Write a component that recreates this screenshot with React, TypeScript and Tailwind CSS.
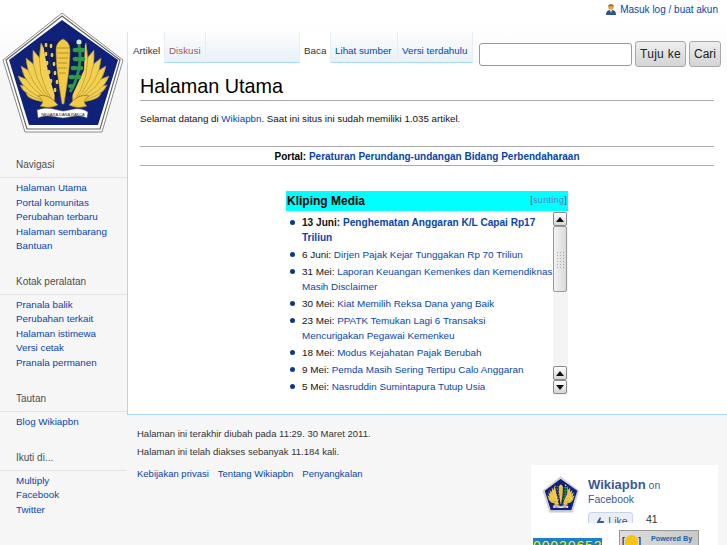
import React from 'react';

const font = "[font-family:'Liberation_Sans',Arial,sans-serif]";

// feather tips for the left wing, the right one is mirrored
const feathers: [number, number][] = [
  [26, 93], [20, 85], [18, 76], [21, 66], [26, 58], [33, 50], [41, 43],
];

const Wing: React.FC = () => (
  <g>
    {feathers.map(([x, y]) => (
      <path
        key={x + '-' + y}
        d={`M54 103 Q${(x + 54) / 2 - 13} ${(y + 103) / 2 + 3} ${x} ${y} Q${(x + 54) / 2 + 11} ${(y + 103) / 2 - 4} 54 103Z`}
        fill="#f3d052"
        stroke="#a5862c"
        strokeWidth="0.6"
      />
    ))}
    <path d="M38 96 C46 94 52 98 58 105 C52 108 46 108 40 106 C44 103 43 99 38 96Z" fill="#f0cb48" stroke="#8f7524" strokeWidth="0.7" />
  </g>
);

const Logo: React.FC<{ className?: string }> = ({ className }) => (
  <svg viewBox="0 0 127 135" className={className}>
    <polygon points="62,13 123,60 102,132 25,132 3,60" fill="#fff" stroke="#8a8a8a" strokeWidth="1" />
    <polygon points="62,16 120,60 100,129 27,129 6,60" fill="#fff" stroke="#666" strokeWidth="1.2" />
    <polygon points="62,20 118,60 98,125 29,125 9,60" fill="#10217a" />
    <Wing />
    <g transform="matrix(-1 0 0 1 127 0)">
      <Wing />
    </g>
    {/* rice */}
    <path d="M43 41 L58 41 L62 92 L56 98 C50 82 45 60 43 41Z" fill="#0d1a5c" />
    <path d="M47 43 C49 60 53 80 59 94" stroke="#2c2f52" strokeWidth="1" fill="none" />
    <g fill="#e6ca5c">
      <ellipse cx="46" cy="45" rx="1.4" ry="2.3" /><ellipse cx="51" cy="46" rx="1.4" ry="2.3" />
      <ellipse cx="46" cy="54" rx="1.4" ry="2.3" /><ellipse cx="52" cy="55" rx="1.4" ry="2.3" />
      <ellipse cx="47" cy="63" rx="1.4" ry="2.3" /><ellipse cx="54" cy="64" rx="1.4" ry="2.3" />
      <ellipse cx="49" cy="72" rx="1.4" ry="2.3" /><ellipse cx="55" cy="73" rx="1.4" ry="2.3" />
      <ellipse cx="51" cy="81" rx="1.4" ry="2.3" /><ellipse cx="57" cy="82" rx="1.4" ry="2.3" />
      <ellipse cx="55" cy="90" rx="1.4" ry="2.3" />
    </g>
    {/* green stalk */}
    <path d="M69 41 L85 41 L84 70 L72 96 L66 96Z" fill="#0d1a5c" />
    <circle cx="79" cy="42" r="2.6" fill="#d8e8dc" />
    <path d="M79 45 C82 60 78 80 70 92" stroke="#2a8f47" strokeWidth="3" fill="none" />
    <g fill="#2f9a4d">
      <ellipse cx="76" cy="50" rx="3.4" ry="2.3" /><ellipse cx="82" cy="50" rx="3.4" ry="2.3" />
      <ellipse cx="76" cy="59" rx="3.4" ry="2.3" /><ellipse cx="82" cy="59" rx="3.4" ry="2.3" />
      <ellipse cx="74" cy="68" rx="3.4" ry="2.3" /><ellipse cx="80" cy="68" rx="3.4" ry="2.3" />
      <ellipse cx="72" cy="77" rx="3.4" ry="2.3" /><ellipse cx="78" cy="77" rx="3.4" ry="2.3" />
      <ellipse cx="71" cy="86" rx="3" ry="2" />
    </g>
    {/* column */}
    <path d="M63 39 C67 41 70 44 70 50 C70 70 66 90 64 104 L62 104 C60 90 56 70 56 50 C56 44 59 41 63 39Z" fill="#f1c944" stroke="#a5862a" strokeWidth="0.6" />
    <path d="M57 48 H69 M57 53 H69 M57 58 H68 M58 63 H67 M58 68 H67 M59 73 H66" stroke="#a5862a" strokeWidth="0.8" />
    {/* ribbon */}
    <path d="M37 110 C48 106 55 110 63 111 C72 110 79 106 88 112 L87 118 C78 114 72 117 63 118 C54 117 47 114 38 118 Z" fill="#fff" stroke="#555" strokeWidth="0.5" />
    <text x="63" y="115.5" textAnchor="middle" fontSize="4" fill="#222" fontFamily="'Liberation Sans',sans-serif">NEGARA DANA RAKCA</text>
  </svg>
);

const NavBlock: React.FC<{ title: string; links: string[]; className: string }> = ({ title, links, className }) => (
  <div className={className}>
    <div className="pl-4 h-[22px] text-[10px] leading-[14px] pt-[2px] text-[#4d4d4d] border-b border-[#e2e2e2]">{title}</div>
    <ul className="pl-4 pt-[3px]">
      {links.map((l) => (
        <li key={l} className="h-[14.5px] text-[9.8px] leading-[14.5px] text-[#0645ad] whitespace-nowrap">{l}</li>
      ))}
    </ul>
  </div>
);

const Tab: React.FC<{ label: string; active?: boolean; color?: string; className?: string }> = ({ label, active, color, className }) => (
  <div
    className={`h-[31px] px-[4px] pt-[12px] text-[9.8px] leading-[14px] whitespace-nowrap border-r border-[#e4eff7] ${
      active ? 'bg-white text-[#333]' : `bg-gradient-to-b from-transparent to-[#e8f2f8] border-b border-b-[#a7d7f9] ${color ?? 'text-[#0645ad]'}`
    } ${className ?? ''}`}
  >
    {label}
  </div>
);

const Arrow: React.FC<{ up?: boolean }> = ({ up }) => (
  <div className="w-[14px] h-[14px] rounded-[2px] border border-[#8b8b8b] bg-gradient-to-b from-white to-[#d6d6d6] flex items-center justify-center">
    <svg viewBox="0 0 8 5" className="w-[8px] h-[5px]">
      <polygon points={up ? '4,0 8,5 0,5' : '0,0 8,0 4,5'} fill="#111" />
    </svg>
  </div>
);

const news: { date: string; title: string; bold?: boolean }[] = [
  { date: '13 Juni:', title: 'Penghematan Anggaran K/L Capai Rp17 Triliun', bold: true },
  { date: '6 Juni:', title: 'Dirjen Pajak Kejar Tunggakan Rp 70 Triliun' },
  { date: '31 Mei:', title: 'Laporan Keuangan Kemenkes dan Kemendiknas\nMasih Disclaimer' },
  { date: '30 Mei:', title: 'Kiat Memilih Reksa Dana yang Baik' },
  { date: '23 Mei:', title: 'PPATK Temukan Lagi 6 Transaksi\nMencurigakan Pegawai Kemenkeu' },
  { date: '18 Mei:', title: 'Modus Kejahatan Pajak Berubah' },
  { date: '9 Mei:', title: 'Pemda Masih Sering Tertipu Calo Anggaran' },
  { date: '5 Mei:', title: 'Nasruddin Sumintapura Tutup Usia' },
];

const App: React.FC = () => {
  return (
    <div className={`relative w-[727px] h-[545px] overflow-hidden flex bg-[#f6f6f6] ${font}`}>
      <div className="absolute inset-x-0 top-0 h-[80px] bg-gradient-to-b from-white from-30% to-[#f6f6f6]" />

      {/* sidebar */}
      <div className="relative w-[127px] shrink-0">
        <Logo className="w-[127px] h-[135px] block" />
        <NavBlock className="mt-[21px]" title="Navigasi" links={['Halaman Utama', 'Portal komunitas', 'Perubahan terbaru', 'Halaman sembarang', 'Bantuan']} />
        <NavBlock className="mt-[19px]" title="Kotak peralatan" links={['Pranala balik', 'Perubahan terkait', 'Halaman istimewa', 'Versi cetak', 'Pranala permanen']} />
        <NavBlock className="mt-[20px]" title="Tautan" links={['Blog Wikiapbn']} />
        <NavBlock className="mt-[19px]" title="Ikuti di..." links={['Multiply', 'Facebook', 'Twitter']} />
      </div>

      {/* main column */}
      <div className="relative flex-1 min-w-0">
        <div className="h-[32px] pt-[3px] pr-[9px] flex justify-end items-start gap-[4px] text-[10px] leading-[14px] text-[#0645ad]">
          <svg viewBox="0 0 10 12" className="w-[10px] h-[12px]">
            <path d="M0 12 C0 8 2 7 5 7 C8 7 10 8 10 12Z" fill="#2f5488" />
            <path d="M4 7 L6 7 L5 10Z" fill="#fff" />
            <circle cx="5" cy="4" r="2.8" fill="#e3a24a" />
            <path d="M2.2 3.6 C2.2 0.4 7.8 0.4 7.8 3.6 C6.5 2.6 3.5 2.6 2.2 3.6Z" fill="#8a6a2c" />
          </svg>
          <span>Masuk log / buat akun</span>
        </div>

        {/* tabs and search */}
        <div className="h-[31px] flex items-start">
          <Tab label="Artikel" active className="border-l border-l-[#cfe6f8] pl-[5px] w-[38px]" />
          <Tab label="Diskusi" color="text-[#a55858]" className="w-[41px]" />
          <div className="w-[93px] h-[31px] border-b border-[#a7d7f9] bg-gradient-to-b from-transparent to-[#e8f2f8]" />
          <Tab label="Baca" active className="w-[32px] border-l border-l-[#e4eff7]" />
          <Tab label="Lihat sumber" className="w-[67px]" />
          <Tab label="Versi terdahulu" className="w-[75px]" />
          <input className="ml-[6px] mt-[11px] w-[153px] h-[23px] bg-white rounded-[3px] border border-[#9a9a9a] outline-none" />
          <button className="ml-[3px] mt-[9px] w-[51px] h-[26px] rounded-[3px] border border-[#a8a8a8] bg-gradient-to-b from-[#eeeeee] to-[#d4d4d4] text-[12px] tracking-[0.3px] text-[#222]">Tuju ke</button>
          <button className="ml-[3px] mt-[9px] w-[32px] h-[26px] rounded-[3px] border border-[#a8a8a8] bg-gradient-to-b from-[#eeeeee] to-[#d4d4d4] text-[12px] text-[#222]">Cari</button>
        </div>

        {/* content */}
        <div className="h-[352px] bg-white border-l border-b border-[#a7d7f9] pl-[12px] pr-[13px]">
          <h1 className="h-[38px] pt-[11px] text-[19.8px] leading-[25px] text-black border-b border-[#aaaaaa]">Halaman Utama</h1>
          <p className="mt-[11px] text-[9.75px] leading-[14px] text-[#111]">
            Selamat datang di <span className="text-[#0645ad]">Wikiapbn</span>. Saat ini situs ini sudah memiliki 1.035 artikel.
          </p>
          <div className="mt-[20px] h-[20px] border-y border-[#aaaaaa] flex items-center justify-center text-[10px] font-bold text-black whitespace-nowrap">
            Portal:&nbsp;<span className="text-[#0645ad]">Peraturan Perundang-undangan Bidang Perbendaharaan</span>
          </div>

          {/* news box */}
          <div className="mt-[25px] ml-[146px] w-[282px]">
            <div className="h-[20px] bg-[#00ffff] flex items-center justify-between pl-[1px] pr-[1px]">
              <span className="text-[12px] font-bold text-black">Kliping Media</span>
              <span className="text-[9px] tracking-[0.3px] text-[#333]">[<span className="text-[#5a7fc4]">sunting</span>]</span>
            </div>
            <div className="flex h-[184px] overflow-hidden">
              <ul className="w-[267px] pt-[4px] pl-[4px] text-[9.9px] leading-[15px] text-[#111]">
                {news.map((n) => (
                  <li key={n.date} className={`flex mb-[2px] ${n.bold ? 'font-bold text-[10.1px]' : ''}`}>
                    <span className="w-[5px] h-[5px] shrink-0 rounded-full bg-[#0b3a80] mt-[5px] mr-[7px]" />
                    <div>
                      {n.date} <span className="text-[#0645ad] whitespace-pre-line">{n.title}</span>
                    </div>
                  </li>
                ))}
              </ul>
              <div className="w-[15px] pt-[1px] flex flex-col bg-[#f4f4f4]">
                <Arrow up />
                <div className="w-[14px] h-[66px] rounded-[2px] border border-[#9a9a9a] bg-gradient-to-r from-[#f3f3f3] to-[#d9d9d9] flex items-center justify-center">
                  <div className="w-[9px] h-[17px] bg-[radial-gradient(#aaaaaa_0.7px,transparent_0.8px)] [background-size:3px_3px]" />
                </div>
                <div className="flex-1" />
                <Arrow up />
                <Arrow />
                <div className="h-[1px]" />
              </div>
            </div>
          </div>
        </div>

        {/* footer */}
        <div className="pl-[10px] pt-[12px] text-[9.5px] leading-[14px] text-[#333]">
          <div>Halaman ini terakhir diubah pada 11:29. 30 Maret 2011.</div>
          <div className="mt-[4px]">Halaman ini telah diakses sebanyak 11.184 kali.</div>
          <div className="mt-[8px] flex gap-[9px] text-[#0645ad]">
            <span>Kebijakan privasi</span><span>Tentang Wikiapbn</span><span>Penyangkalan</span>
          </div>
        </div>

        {/* facebook box */}
        <div className="absolute left-[404px] top-[465px] w-[187px] h-[80px] bg-white">
          <div className="h-[58px] overflow-hidden pl-[11px] pt-[12px] flex gap-[8px]">
            <Logo className="w-[38px] h-[42px] shrink-0 -mt-[5px]" />
            <div>
              <div className="h-[15px] text-[#3b5998] text-[10.5px] leading-[15px]"><span className="text-[13px] font-bold">Wikiapbn</span> on</div>
              <div className="h-[15px] text-[#3b5998] text-[10.5px] leading-[15px]">Facebook</div>
              <div className="mt-[5px] flex items-start">
                <div className="w-[45px] h-[20px] rounded-[3px] border border-[#cad4e7] bg-[#eceef5] text-[10.5px] text-[#3b5998] flex items-center justify-center gap-[3px]">
                  <svg viewBox="0 0 12 10" className="w-[12px] h-[10px]"><path d="M0 6h3v4H0zM4 5l3-5 1 1-1 3h4l-1 6H4z" fill="#3b5998" /></svg>
                  Like
                </div>
                <span className="ml-[13px] text-[10.5px] text-[#333]">41</span>
              </div>
            </div>
          </div>

          {/* badges */}
          <div className="absolute left-[2px] top-[73px] w-[69px] h-[16px] bg-[#1c7fc8] text-[#ffee00] text-[14px] leading-[16px] tracking-[0.9px] text-center">00030653</div>
          <div className="absolute left-[88px] top-[65px] w-[80px] h-[20px] bg-gradient-to-r from-[#dddddd] to-[#c9c9c9] border border-[#999] flex gap-[10px] pl-[2px]">
            <div className="flex items-start text-[9px] leading-[12px] font-bold text-[#1c2f7a] mt-[4px]">
              [<span className="w-[13px] h-[13px] bg-[#f5c518] rounded-full" />]
            </div>
            <span className="text-[7.2px] leading-[10px] font-bold text-[#1c5fa8] mt-[3px]">Powered By</span>
          </div>
        </div>
      </div>
    </div>
  );
};

export default App;
